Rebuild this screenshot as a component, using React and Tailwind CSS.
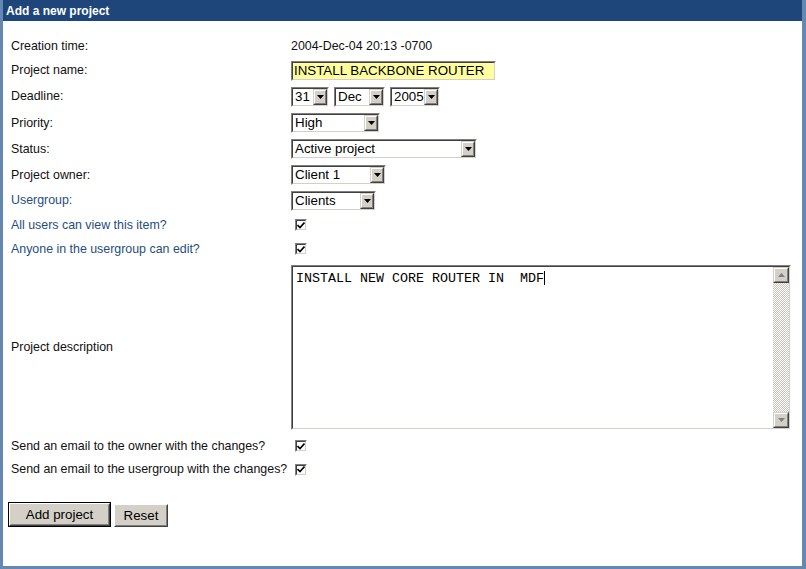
import React from "react";

const F = { fontFamily: '"Liberation Sans", Arial, sans-serif' };

function Inset({ className = "", children, bg = "bg-white" }) {
  return (
    <div className={`border border-t-[#808080] border-l-[#808080] border-r-white border-b-white ${className}`}>
      <div className={`w-full h-full border border-t-[#404040] border-l-[#404040] border-r-[#d4d0c8] border-b-[#d4d0c8] ${bg} flex`}>
        {children}
      </div>
    </div>
  );
}

function ArrowBtn({ dir = "down", disabled = false, w = "w-[14px]" }) {
  const color = disabled ? "#808080" : "#000000";
  return (
    <div className={`${w} h-full border border-t-[#d4d0c8] border-l-[#d4d0c8] border-r-[#404040] border-b-[#404040] shrink-0`}>
      <div className="w-full h-full border border-t-white border-l-white border-r-[#808080] border-b-[#808080] bg-[#d4d0c8] flex items-center justify-center">
        <svg width="7" height="4" viewBox="0 0 7 4">
          {dir === "down" ? (
            <polygon points="0,0 7,0 3.5,4" fill={color} />
          ) : (
            <polygon points="0,4 7,4 3.5,0" fill={color} />
          )}
        </svg>
      </div>
    </div>
  );
}

function Select({ w, value }) {
  return (
    <Inset className={`h-[20px] ${w}`}>
      <div className="flex-1 min-w-0 flex items-center pl-[2px] text-[13.33px] text-black leading-none whitespace-nowrap" style={F}>
        {value}
      </div>
      <ArrowBtn w="w-[14px]" />
    </Inset>
  );
}

function Check() {
  return (
    <Inset className="w-[12px] h-[12px] ml-[4px]">
      <div className="flex-1 flex items-center justify-center">
        <svg width="8" height="7" viewBox="0 0 8 7">
          <path d="M0.5 3 L3 5.5 L7.5 0.5" stroke="#000" strokeWidth="1.6" fill="none" />
        </svg>
      </div>
    </Inset>
  );
}

function Row({ h, label, blue, children }) {
  return (
    <div className={`flex items-center ${h}`}>
      <div className={`w-[280px] shrink-0 text-[12.4px] ${blue ? "text-[#1f4e7f]" : "text-[#111111]"}`} style={F}>
        {label}
      </div>
      <div className="flex items-center gap-[5px]">{children}</div>
    </div>
  );
}

export default function App() {
  return (
    <div className="w-[806px] h-[569px] bg-[#6389b2] pl-[3px] pr-[4px] pb-[3px] flex flex-col" style={F}>
      <div className="h-[21px] bg-[#1e467a] flex items-center pl-[3px] shrink-0">
        <span className="text-white font-bold text-[12px]" style={F}>Add a new project</span>
      </div>
      <div className="flex-1 bg-white pl-[8px] pt-[13px] flex flex-col">
        <Row h="h-[24px]" label="Creation time:">
          <span className="text-[12.4px] text-[#111111]" style={F}>2004-Dec-04 20:13 -0700</span>
        </Row>
        <Row h="h-[25px]" label="Project name:">
          <Inset className="w-[205px] h-[20px]" bg="bg-[#ffffa0]">
            <div className="flex items-center pl-[1px] text-[13.33px] text-black leading-none" style={F}>
              INSTALL BACKBONE ROUTER
            </div>
          </Inset>
        </Row>
        <Row h="h-[27px]" label="Deadline:">
          <Select w="w-[38px]" value="31" />
          <Select w="w-[51px]" value="Dec" />
          <Select w="w-[50px]" value="2005" />
        </Row>
        <Row h="h-[26px]" label="Priority:">
          <Select w="w-[89px]" value="High" />
        </Row>
        <Row h="h-[26px]" label="Status:">
          <Select w="w-[186px]" value="Active project" />
        </Row>
        <Row h="h-[26px]" label="Project owner:">
          <Select w="w-[95px]" value="Client 1" />
        </Row>
        <Row h="h-[25px]" label="Usergroup:" blue>
          <Select w="w-[85px]" value="Clients" />
        </Row>
        <Row h="h-[24px]" label="All users can view this item?" blue>
          <Check />
        </Row>
        <Row h="h-[24px]" label="Anyone in the usergroup can edit?" blue>
          <Check />
        </Row>
        <div className="flex items-center mt-[4px] h-[165px]">
          <div className="w-[280px] shrink-0 text-[12.4px] text-[#111111]" style={F}>Project description</div>
          <Inset className="w-[500px] h-[165px]">
            <div className="flex-1 pl-[3px] pt-[4px] text-[13.33px] text-black leading-none whitespace-pre" style={{ fontFamily: '"Liberation Mono", "Courier New", monospace' }}>
              INSTALL NEW CORE ROUTER IN  MDF<span className="inline-block w-px h-[14px] bg-black align-[-3px]"></span>
            </div>
            <div className="w-[16px] h-full flex flex-col bg-[repeating-conic-gradient(#c8c4bc_0_25%,#ffffff_0_50%)] bg-[length:2px_2px]">
              <div className="h-[16px]"><ArrowBtn dir="up" disabled w="w-[16px]" /></div>
              <div className="flex-1"></div>
              <div className="h-[16px]"><ArrowBtn dir="down" disabled w="w-[16px]" /></div>
            </div>
          </Inset>
        </div>
        <div className="mt-[4px]"></div>
        <Row h="h-[24px]" label="Send an email to the owner with the changes?">
          <Check />
        </Row>
        <Row h="h-[23px]" label="Send an email to the usergroup with the changes?">
          <Check />
        </Row>
        <div className="flex items-end gap-[3px] mt-[21px] -ml-[3px]">
          <div className="w-[103px] h-[25px] border border-black">
            <div className="w-full h-full border border-t-white border-l-white border-r-[#404040] border-b-[#404040]">
              <div className="w-full h-full border border-t-[#d4d0c8] border-l-[#d4d0c8] border-r-[#808080] border-b-[#808080] bg-[#d4d0c8] flex items-center justify-center text-[13.33px] text-black leading-none" style={F}>
                Add project
              </div>
            </div>
          </div>
          <div className="w-[54px] h-[23px] border border-t-white border-l-white border-r-[#404040] border-b-[#404040]">
            <div className="w-full h-full border border-t-[#d4d0c8] border-l-[#d4d0c8] border-r-[#808080] border-b-[#808080] bg-[#d4d0c8] flex items-center justify-center text-[13.33px] text-black leading-none" style={F}>
              Reset
            </div>
          </div>
        </div>
      </div>
    </div>
  );
}
